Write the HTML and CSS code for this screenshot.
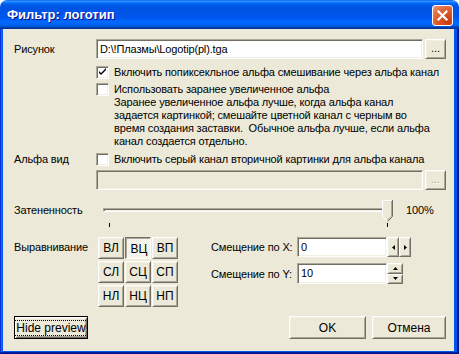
FILE: index.html
```html
<!DOCTYPE html>
<html lang="ru">
<head>
    <meta charset="UTF-8">
    <title>Фильтр: логотип</title>
    <link rel="stylesheet" href="styles.css">
</head>
<body>
    <div class="window">
        <div class="titlebar">
            <span class="title">Фильтр: логотип</span>
            <span class="close">
                <svg width="19" height="19" viewBox="0 0 19 19"><path d="M5.5 5.5 L13.5 13.5 M13.5 5.5 L5.5 13.5" stroke="#fff" stroke-width="2.2" stroke-linecap="square"/></svg>
            </span>
        </div>
        <div class="frame">
            <div class="client">
                <div class="row row-file">
                    <span class="label">Рисунок</span>
                    <div class="field">D:\!Плазмы\Logotip(pl).tga</div>
                    <button class="btn browse">...</button>
                </div>

                <div class="check-row check-first">
                    <span class="checkbox">
                        <svg width="9" height="9" viewBox="0 0 9 9"><path d="M1 3 V5 L3 7 L8 2 V0 L3 5 Z" fill="#000"/></svg>
                    </span>
                    <span>Включить попиксекльное альфа смешивание через альфа канал</span>
                </div>
                <div class="check-row check-second">
                    <span class="checkbox"></span>
                    <span class="check-text">Использовать заранее увеличенное альфа<br>Заранее увеличенное альфа лучше, когда альфа канал<br>задается картинкой; смешайте цветной канал с черным во<br>время создания заставки.&nbsp; Обычное альфа лучше, если альфа<br>канал создается отдельно.</span>
                </div>

                <div class="row row-alpha">
                    <span class="label">Альфа вид</span>
                    <span class="checkbox"></span>
                    <span class="check-label">Включить серый канал вторичной картинки для альфа канала</span>
                </div>
                <div class="row row-file2">
                    <div class="field disabled"></div>
                    <button class="btn browse disabled">...</button>
                </div>

                <div class="row row-slider">
                    <span class="label">Затененность</span>
                    <div class="slider">
                        <div class="track"></div>
                        <span class="tick tick-min"></span>
                        <span class="tick tick-max"></span>
                        <svg class="thumb" width="11" height="22" viewBox="0 0 11 22">
                            <polygon points="0,0 11,0 11,16 5.5,21.5 0,16" fill="#ece9d8"/>
                            <polyline points="0.5,16.5 0.5,0.5 10,0.5" fill="none" stroke="#fff"/>
                            <polyline points="0.5,16.5 5,21" fill="none" stroke="#fff"/>
                            <polyline points="10.5,0 10.5,16.5 5.5,21.5" fill="none" stroke="#716f64"/>
                            <polyline points="9.5,1 9.5,16 5.5,20" fill="none" stroke="#aca899"/>
                        </svg>
                    </div>
                    <span class="slider-value">100%</span>
                </div>

                <div class="row row-align">
                    <span class="label">Выравнивание</span>
                    <div class="align-grid">
                        <button class="btn cell">ВЛ</button>
                        <button class="btn cell pressed">ВЦ</button>
                        <button class="btn cell">ВП</button>
                        <button class="btn cell">СЛ</button>
                        <button class="btn cell">СЦ</button>
                        <button class="btn cell">СП</button>
                        <button class="btn cell">НЛ</button>
                        <button class="btn cell">НЦ</button>
                        <button class="btn cell">НП</button>
                    </div>
                    <div class="offsets">
                        <div class="offset-row">
                            <span class="offset-label">Смещение по X:</span>
                            <div class="field offset-field">0</div>
                            <div class="spin-h">
                                <button class="btn spin-btn"><svg width="3" height="5" viewBox="0 0 3 5"><path d="M3 0 V5 L0 2.5 Z"/></svg></button>
                                <button class="btn spin-btn"><svg width="3" height="5" viewBox="0 0 3 5"><path d="M0 0 V5 L3 2.5 Z"/></svg></button>
                            </div>
                        </div>
                        <div class="offset-row offset-y">
                            <span class="offset-label">Смещение по Y:</span>
                            <div class="field offset-field">10</div>
                            <div class="spin-v">
                                <button class="btn spin-btn"><svg width="5" height="3" viewBox="0 0 5 3"><path d="M0 3 H5 L2.5 0 Z"/></svg></button>
                                <button class="btn spin-btn"><svg width="5" height="3" viewBox="0 0 5 3"><path d="M0 0 H5 L2.5 3 Z"/></svg></button>
                            </div>
                        </div>
                    </div>
                </div>

                <div class="footer">
                    <button class="btn default-btn"><span class="focus">Hide preview</span></button>
                    <div class="footer-right">
                        <button class="btn action ok">OK</button>
                        <button class="btn action cancel">Отмена</button>
                    </div>
                </div>
            </div>
        </div>
    </div>
</body>
</html>
```

FILE: styles.css
```css
* {
    box-sizing: border-box;
}

body {
    margin: 0;
    background-color: #ffffff;
    font-family: "Liberation Sans", Arial, sans-serif;
    font-size: 11px;
    color: #000000;
}

.window {
    width: 459px;
    height: 354px;
    display: flex;
    flex-direction: column;
    border-radius: 7px 7px 0 0;
    overflow: hidden;
}

/* title bar */

.titlebar {
    height: 29px;
    flex: none;
    display: flex;
    align-items: center;
    justify-content: space-between;
    padding: 0 6px 0 7px;
    background: linear-gradient(to bottom, #0058ee 0%, #3593ff 4%, #288eff 6%, #127dff 8%, #036ffc 10%, #0262ee 14%, #0057e5 20%, #0054e3 24%, #0055eb 56%, #005bf5 66%, #026afe 76%, #0062ef 86%, #0052d6 92%, #0040ab 94%, #003092 100%);
}

.title {
    font-weight: bold;
    font-size: 13px;
    color: #ffffff;
    text-shadow: 1px 1px #0f1089;
}

.close {
    width: 21px;
    height: 21px;
    margin-top: 2px;
    display: flex;
    align-items: center;
    justify-content: center;
    border: 1px solid #ffffff;
    border-radius: 3px;
    background: radial-gradient(circle at 80% 85%, #c83a10 0%, #dc5a2a 50%, #e8825e 85%, #f3b096 100%);
}

/* frame and client */

.frame {
    flex: 1;
    display: flex;
    padding: 0 5px 3px 3px;
    background-color: #0055ea;
    box-shadow: inset -1px -1px #00138c, inset 1px 0 #0831d9, inset -2px -2px #001ea0, inset 2px 0 #166aee;
}

.client {
    flex: 1;
    display: flex;
    flex-direction: column;
    padding: 10px 8px 0 11px;
    background-color: #ece9d8;
    letter-spacing: -0.15px;
}

.row {
    display: flex;
    align-items: center;
}

.label {
    width: 82px;
    flex: none;
}

/* 3d controls */

.field {
    height: 20px;
    background-color: #ffffff;
    border: 1px solid;
    border-color: #aca899 #ffffff #ffffff #aca899;
    box-shadow: inset 1px 1px #716f64, inset -1px -1px #f1efe2;
    padding: 0 3px;
    line-height: 18px;
    white-space: nowrap;
    overflow: hidden;
}

.field.disabled {
    background-color: #ece9d8;
}

.btn {
    font-family: "Liberation Sans", Arial, sans-serif;
    font-size: 11px;
    color: #000000;
    background-color: #ece9d8;
    border: 1px solid;
    border-color: #ffffff #716f64 #716f64 #ffffff;
    box-shadow: inset 1px 1px #f1efe2, inset -1px -1px #aca899;
    padding: 0;
    margin: 0;
    display: flex;
    align-items: center;
    justify-content: center;
}

.btn.disabled {
    color: #aca899;
    text-shadow: 1px 1px #ffffff;
}

.checkbox {
    width: 13px;
    height: 13px;
    flex: none;
    display: flex;
    align-items: center;
    justify-content: center;
    background-color: #ffffff;
    border: 1px solid;
    border-color: #aca899 #ffffff #ffffff #aca899;
    box-shadow: inset 1px 1px #716f64, inset -1px -1px #f1efe2;
}

/* file rows */

.row-file .field {
    width: 327px;
}

.browse {
    width: 21px;
    height: 20px;
    margin-left: 2px;
    padding-bottom: 3px;
}

.check-row {
    display: flex;
    align-items: flex-start;
    gap: 5px;
    margin-left: 82px;
    line-height: 13px;
    white-space: nowrap;
}

.check-first {
    margin-top: 7px;
}

.check-second {
    margin-top: 4px;
}

.row-alpha {
    margin-top: 5px;
    line-height: 13px;
}

.check-label {
    margin-left: 5px;
    white-space: nowrap;
}

.row-file2 {
    margin-top: 4px;
    margin-left: 82px;
}

.row-file2 .field {
    width: 327px;
}

/* slider */

.row-slider {
    margin-top: 10px;
    height: 28px;
    align-items: flex-start;
}

.row-slider .label {
    margin-top: 4px;
}

.slider {
    position: relative;
    width: 300px;
    height: 28px;
}

.track {
    height: 4px;
    margin: 8px 4px 0 7px;
    border: 1px solid;
    border-color: #aca899 #ffffff #ffffff #aca899;
    box-shadow: inset 1px 1px #716f64, inset -1px -1px #f1efe2;
}

.thumb {
    position: absolute;
    left: 286px;
    top: 0;
}

.tick {
    position: absolute;
    top: 23px;
    width: 1px;
    height: 4px;
    background-color: #000000;
}

.tick-min {
    left: 13px;
}

.tick-max {
    left: 291px;
}

.slider-value {
    margin-left: 10px;
    margin-top: 4px;
}

/* alignment */

.row-align {
    margin-top: 9px;
    align-items: flex-start;
}

.row-align .label {
    margin-top: 4px;
}

.align-grid {
    margin-left: 2px;
    display: grid;
    grid-template-columns: repeat(3, 26px);
    grid-auto-rows: 22px;
    column-gap: 1px;
    row-gap: 2px;
}

.cell {
    font-size: 12px;
}

.cell.pressed {
    border-color: #716f64 #ffffff #ffffff #716f64;
    box-shadow: inset 1px 1px #aca899;
    background: repeating-conic-gradient(#ffffff 0 25%, #ece9d8 0 50%) 0 0 / 2px 2px;
    padding: 2px 0 0 2px;
}

.offsets {
    margin-left: 33px;
    display: flex;
    flex-direction: column;
}

.offset-row {
    display: flex;
    align-items: center;
}

.offset-y {
    margin-top: 6px;
}

.offset-label {
    width: 86px;
    white-space: nowrap;
}

.offset-field {
    width: 90px;
}

.offset-y .offset-field {
    height: 21px;
}

.spin-h {
    display: flex;
}

.spin-h .spin-btn {
    width: 12px;
    height: 20px;
}

.spin-v {
    display: flex;
    flex-direction: column;
}

.spin-v .spin-btn {
    width: 16px;
    height: 10.5px;
}

/* footer */

.footer {
    margin-top: 9px;
    display: flex;
    justify-content: space-between;
}

.default-btn {
    width: 74px;
    height: 23px;
    border: 1px solid #000000;
    box-shadow: inset 1px 1px #ffffff, inset -1px -1px #716f64, inset 2px 2px #f1efe2, inset -2px -2px #aca899;
    font-size: 12px;
}

.focus {
    outline: 1px dotted #000000;
    padding: 0 1px;
    line-height: 14px;
}

.footer-right {
    display: flex;
    gap: 6px;
}

.action {
    height: 23px;
    font-size: 12px;
}

.ok {
    width: 77px;
}

.cancel {
    width: 74px;
}
```
